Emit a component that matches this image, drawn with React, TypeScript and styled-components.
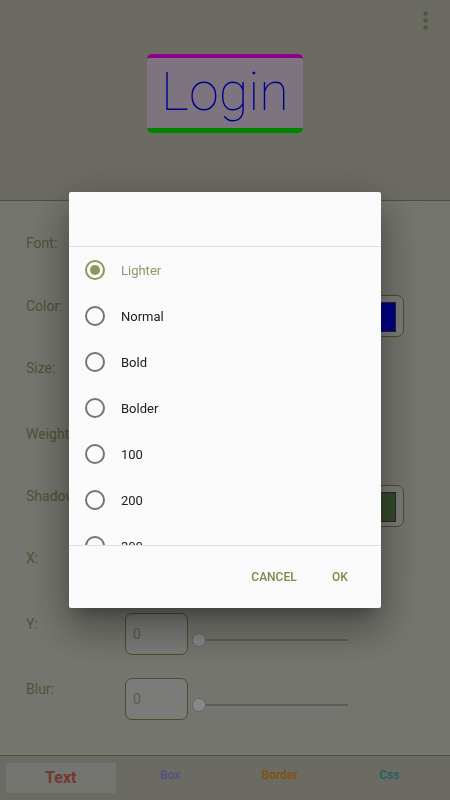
import React, { FC } from 'react'
import styled, { createGlobalStyle } from 'styled-components'

const GlobalStyle = createGlobalStyle`
  html, body {
    margin: 0;
    padding: 0;
    font-family: Roboto, "Liberation Sans", sans-serif;
  }
  * {
    box-sizing: border-box;
  }
`

const Page = styled.div`
  height: 100vh;
  display: flex;
  flex-direction: column;
  background: #d6d6cb;
`

const Header = styled.div`
  height: 201px;
  flex-shrink: 0;
  background: #c4c4b6;
  border-bottom: 1px solid #90975a;
  display: flex;
  flex-direction: column;
  align-items: center;
  padding-top: 6px;
`

const TopBar = styled.div`
  align-self: stretch;
  height: 28px;
  display: flex;
  justify-content: flex-end;
  padding-right: 21px;
`

const MenuButton = styled.div`
  width: 8px;
  height: 28px;
  display: flex;
  align-items: center;
  justify-content: center;
`

const Preview = styled.div`
  margin-top: 20px;
  width: 156px;
  height: 79px;
  border-radius: 5px;
  background: #e5d3e9;
  border-top: 4px solid #ff00ff;
  border-bottom: 5px solid #00f000;
  display: flex;
  align-items: center;
  justify-content: center;
  font-size: 54px;
  font-weight: 100;
  color: #0000ff;
  line-height: 1;
  padding-bottom: 2px;
`

const Form = styled.div`
  flex: 1;
  padding: 31px 46px 0 26px;
  display: flex;
  flex-direction: column;
`

const Row = styled.div<{ h: number }>`
  height: ${(p) => p.h}px;
  display: flex;
  align-items: flex-start;
`

const Label = styled.div`
  width: 99px;
  font-size: 14px;
  line-height: 22px;
  color: #8e9764;
`

const Spacer = styled.div`
  flex: 1;
`

const ValueBox = styled.div`
  width: 63px;
  height: 42px;
  border: 1px solid #878e4d;
  border-radius: 7px;
  background: #e1e1de;
  font-size: 14px;
  color: #a4a883;
  padding: 12px 0 0 7px;
`

const ColorBox = styled.div<{ swatch: string }>`
  width: 63px;
  height: 42px;
  border: 1px solid #878e4d;
  border-radius: 7px;
  background: #e1e1de;
  padding: 6px 7px;

  &::after {
    content: '';
    display: block;
    height: 100%;
    background: ${(p) => p.swatch};
    border: 1px solid #4a4a44;
  }
`

const Slider = styled.div`
  width: 160px;
  margin-left: 4px;
  margin-top: 20px;
  height: 14px;
  display: flex;
  align-items: center;
`

const Thumb = styled.div`
  width: 14px;
  height: 14px;
  border-radius: 50%;
  background: #f6f6f8;
  border: 1px solid #b8b8b8;
  flex-shrink: 0;
`

const Track = styled.div`
  flex: 1;
  height: 2px;
  background: #a8a8a4;
  margin-right: 4px;
`

const TabBar = styled.div`
  height: 45px;
  flex-shrink: 0;
  background: #c4c4b6;
  border-top: 1px solid #90975a;
  padding: 7px 6px;
  display: grid;
  grid-template-columns: repeat(4, 1fr);
`

const Tab = styled.div<{ color: string; active?: boolean }>`
  display: flex;
  align-items: ${(p) => (p.active ? 'center' : 'flex-start')};
  justify-content: center;
  padding-top: ${(p) => (p.active ? '0' : '1px')};
  background: ${(p) => (p.active ? '#d3d3cc' : 'transparent')};
  color: ${(p) => p.color};
  font-weight: 700;
  font-size: ${(p) => (p.active ? '16px' : '12px')};
  line-height: 22px;
`

const Scrim = styled.div`
  position: fixed;
  inset: 0;
  background: rgba(0, 0, 0, 0.45);
  display: flex;
  align-items: center;
  justify-content: center;
`

const Dialog = styled.div`
  width: 312px;
  height: 416px;
  background: #fafafa;
  border-radius: 2px;
  display: flex;
  flex-direction: column;
  box-shadow: 0 11px 15px -7px rgba(0, 0, 0, 0.3),
    0 24px 38px 3px rgba(0, 0, 0, 0.2),
    0 9px 46px 8px rgba(0, 0, 0, 0.16);
`

const DialogTitle = styled.div`
  height: 55px;
  flex-shrink: 0;
  border-bottom: 1px solid #e0e0e0;
`

const OptionList = styled.div`
  height: 299px;
  flex-shrink: 0;
  overflow: hidden;
  border-bottom: 1px solid #e0e0e0;
`

const Option = styled.div<{ selected?: boolean }>`
  height: 46px;
  display: flex;
  align-items: center;
  padding-left: 16px;
  gap: 16px;
  font-size: 13px;
  color: ${(p) => (p.selected ? '#8c9a68' : '#212121')};
`

const Radio = styled.div<{ selected?: boolean }>`
  width: 20px;
  height: 20px;
  border-radius: 50%;
  border: 2px solid ${(p) => (p.selected ? '#8a9a5e' : '#757575')};
  display: flex;
  align-items: center;
  justify-content: center;

  &::after {
    content: '';
    width: 10px;
    height: 10px;
    border-radius: 50%;
    background: ${(p) => (p.selected ? '#8a9a5e' : 'transparent')};
  }
`

const Actions = styled.div`
  flex: 1;
  display: flex;
  align-items: center;
  justify-content: flex-end;
  padding-right: 9px;
  gap: 2px;
`

const ActionButton = styled.div`
  min-width: 64px;
  height: 36px;
  padding: 0 8px;
  display: flex;
  align-items: center;
  justify-content: center;
  font-size: 12px;
  font-weight: 500;
  color: #7b8a4a;
  text-transform: uppercase;
`

const options = ['Lighter', 'Normal', 'Bold', 'Bolder', '100', '200', '300', '400']

const App: FC = () => {
    return (
        <>
            <GlobalStyle />
            <Page>
                <Header>
                    <TopBar>
                        <MenuButton>
                            <svg width="5" height="19" viewBox="0 0 5 19">
                                <circle cx="2.5" cy="2.5" r="2.2" fill="#8a9b62" />
                                <circle cx="2.5" cy="9.5" r="2.2" fill="#8a9b62" />
                                <circle cx="2.5" cy="16.5" r="2.2" fill="#8a9b62" />
                            </svg>
                        </MenuButton>
                    </TopBar>
                    <Preview>Login</Preview>
                </Header>
                <Form>
                    <Row h={63}>
                        <Label>Font:</Label>
                    </Row>
                    <Row h={62}>
                        <Label>Color:</Label>
                        <Spacer />
                        <ColorBox swatch="#0000f8" />
                    </Row>
                    <Row h={66}>
                        <Label>Size:</Label>
                        <ValueBox>56</ValueBox>
                    </Row>
                    <Row h={62}>
                        <Label>Weight:</Label>
                    </Row>
                    <Row h={62}>
                        <Label>Shadow:</Label>
                        <Spacer />
                        <ColorBox swatch="#618752" />
                    </Row>
                    <Row h={66}>
                        <Label>X:</Label>
                        <ValueBox>0</ValueBox>
                    </Row>
                    <Row h={65}>
                        <Label>Y:</Label>
                        <ValueBox>0</ValueBox>
                        <Slider>
                            <Thumb />
                            <Track />
                        </Slider>
                    </Row>
                    <Row h={65}>
                        <Label>Blur:</Label>
                        <ValueBox>0</ValueBox>
                        <Slider>
                            <Thumb />
                            <Track />
                        </Slider>
                    </Row>
                </Form>
                <TabBar>
                    <Tab active color="#d0665a">Text</Tab>
                    <Tab color="#9a96e0">Box</Tab>
                    <Tab color="#e8962c">Border</Tab>
                    <Tab color="#44b4b4">Css</Tab>
                </TabBar>
            </Page>
            <Scrim>
                <Dialog>
                    <DialogTitle />
                    <OptionList>
                        {options.map((o, i) => (
                            <Option key={o} selected={i === 0}>
                                <Radio selected={i === 0} />
                                {o}
                            </Option>
                        ))}
                    </OptionList>
                    <Actions>
                        <ActionButton>Cancel</ActionButton>
                        <ActionButton>Ok</ActionButton>
                    </Actions>
                </Dialog>
            </Scrim>
        </>
    )
}

export default App
